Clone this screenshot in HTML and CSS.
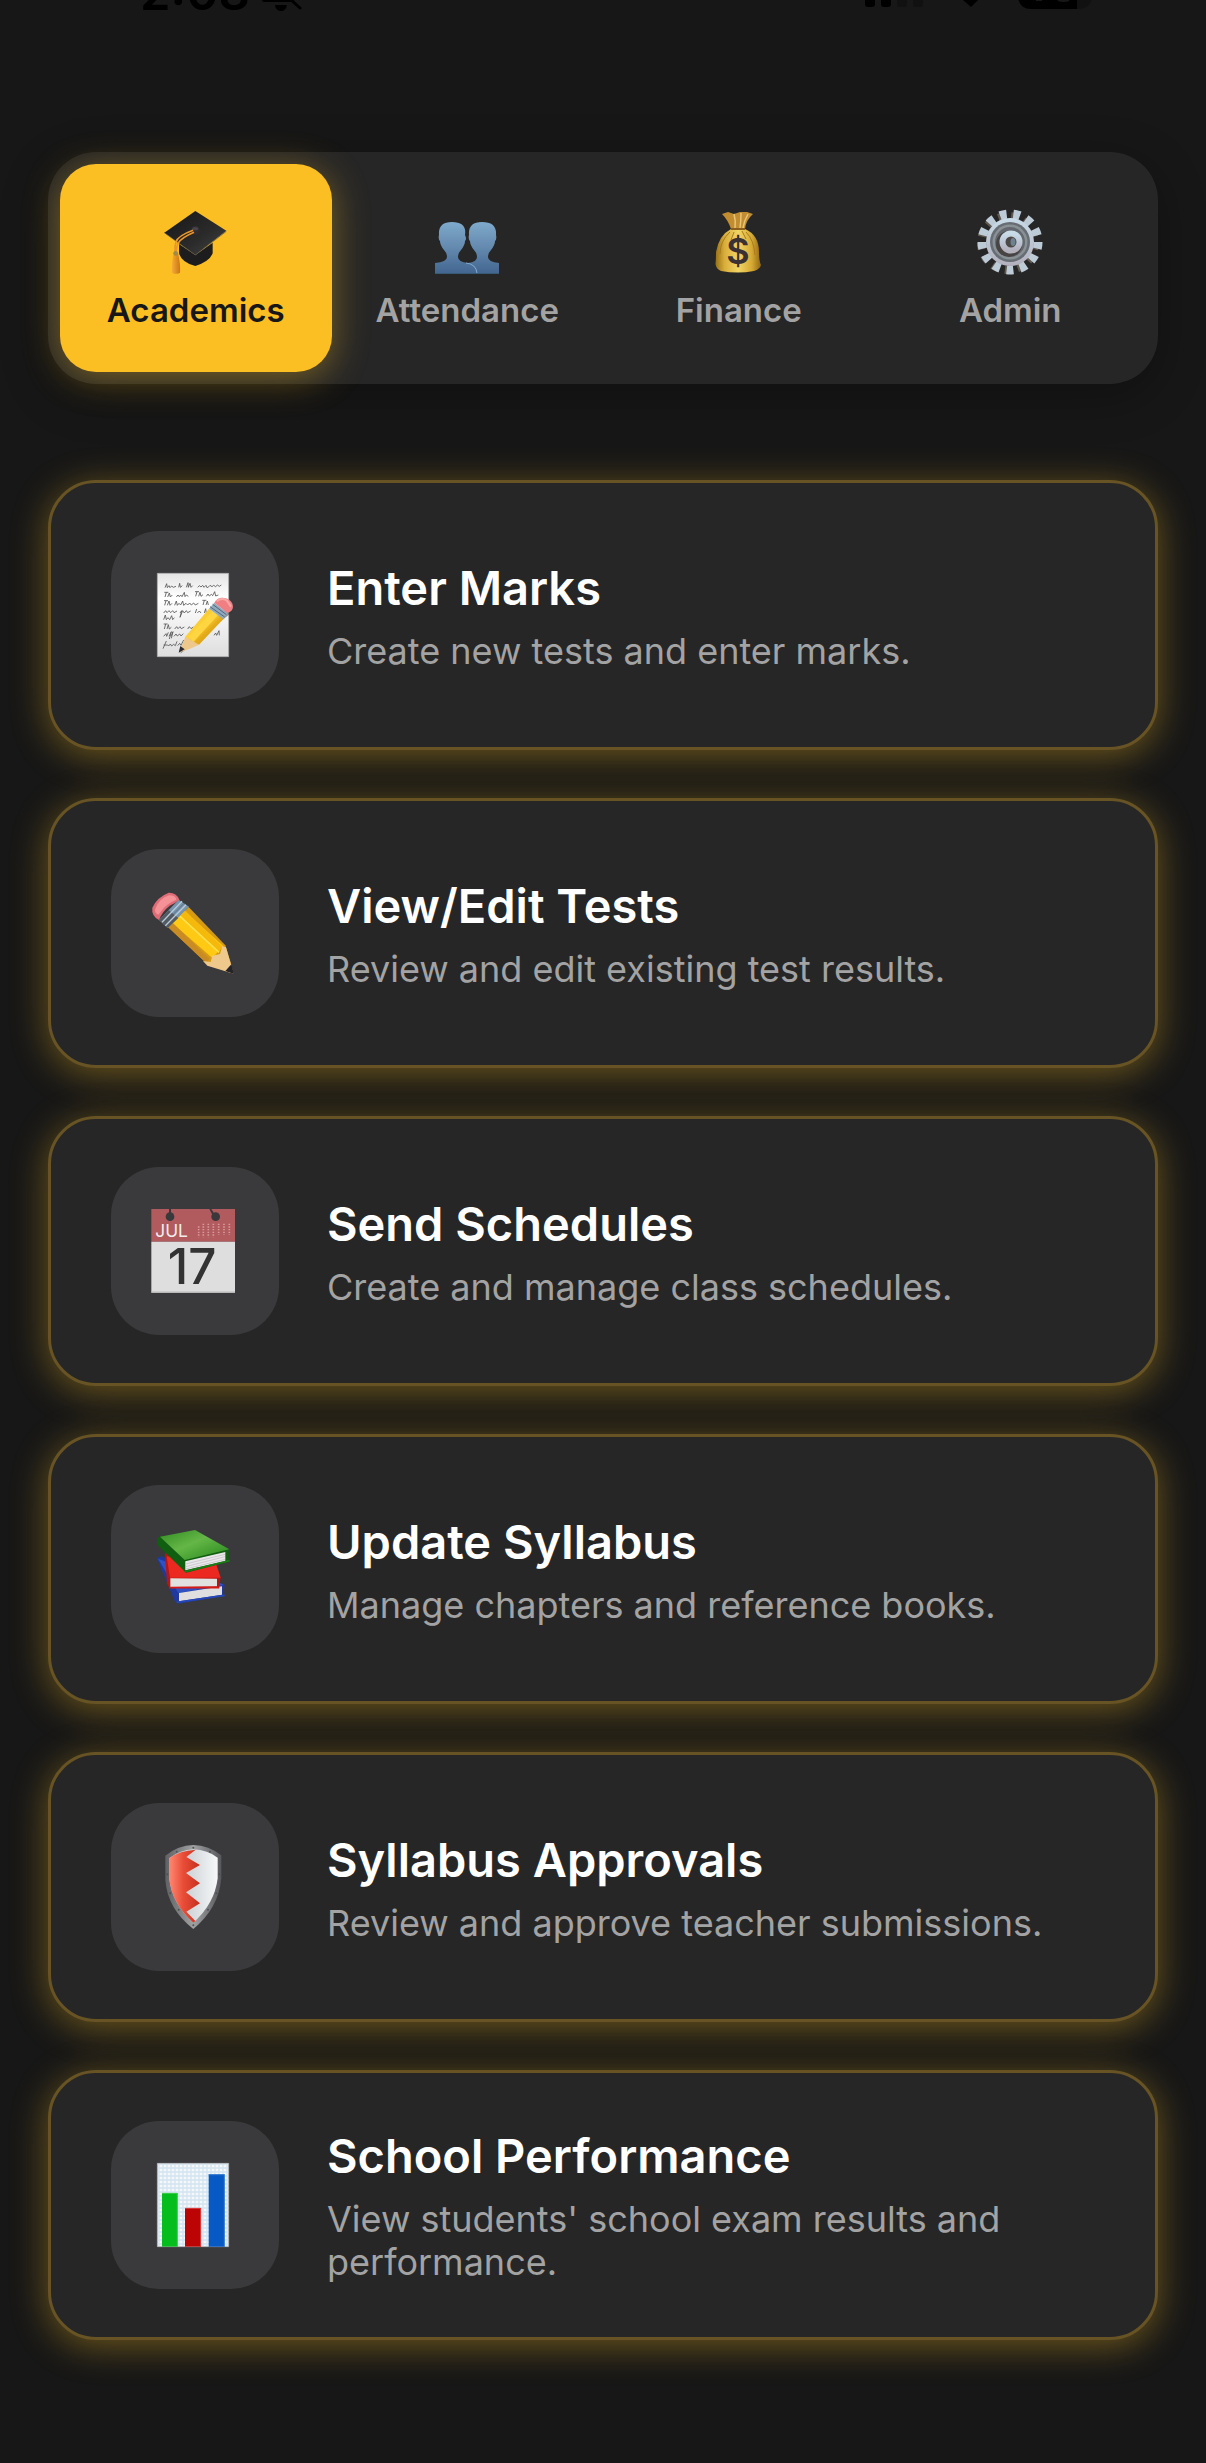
FILE: index.html
```html
<!DOCTYPE html>
<html lang="en">
<head>
<meta charset="utf-8">
<meta name="viewport" content="width=device-width, initial-scale=1">
<title>Academics</title>
<link rel="stylesheet" href="styles.css">
</head>
<body>
<div class="status" aria-hidden="true">
  <span class="status-left"><span class="clock">2:08</span>
    <svg class="bell" viewBox="0 0 40 12"><path d="M0 0H32V2H3Q0 2 0 0ZM13 5H25Q24 11 19 11Q14 11 13 5Z"/><path d="M29 0L38 8" stroke="#000" stroke-width="3" stroke-linecap="round"/></svg>
  </span>
  <svg class="signals" viewBox="0 0 228 12">
    <rect x="0" y="-12" width="10" height="19" rx="3"/><rect x="16" y="-12" width="10" height="19" rx="3"/>
    <rect x="32" y="-12" width="10" height="19" rx="3" fill="#111"/><rect x="48" y="-12" width="10" height="19" rx="3" fill="#111"/>
    <path d="M98 0H113L106 7Z"/>
    <path d="M212 -10H217Q227 -10 227 -3Q226 9 212 9Z" fill="#111"/><path d="M153 -10H212V9H166Q155 9 153 -2Z"/>
    <path d="M171 0H177M193 0Q199 2 204 0" stroke="#171717" stroke-width="2" fill="none"/>
  </svg>
</div>

<nav class="tabs" aria-label="Sections">
  <button class="tab tab-active" type="button" aria-current="page">
    <svg class="tab-icon" viewBox="38 27 198 198" aria-hidden="true">
      <defs><linearGradient id="cap" x1="0" y1="0" x2="1" y2="1"><stop offset="0" stop-color="#161616"/><stop offset=".6" stop-color="#2b2b2b"/><stop offset="1" stop-color="#444"/></linearGradient>
      <linearGradient id="tassel"><stop offset="0" stop-color="#f5ab34"/><stop offset="1" stop-color="#c97614"/></linearGradient></defs>
      <path d="M86 132V160Q94 188 135 198Q178 184 187 160V128L135 165Z" fill="#1d1d1d"/>
      <path d="M135 33L228 92L135 165L42 98Z" fill="url(#cap)"/>
      <path d="M42 98L135 165L228 94" fill="none" stroke="#555" stroke-width="2"/>
      <circle cx="135" cy="91" r="13" fill="#2f2c31"/><ellipse cx="135" cy="86" rx="9" ry="5" fill="#47434a"/>
      <path d="M128 91Q82 108 77 126Q73 136 74 154M131 97Q92 114 83 130Q78 140 78 154" fill="none" stroke="#e9962a" stroke-width="5"/>
      <path d="M70 158H83Q91 196 89 218Q77 225 65 218Q63 190 70 158Z" fill="url(#tassel)"/><circle cx="76" cy="160" r="7" fill="#9b8b4c"/>
    </svg>
    <span>Academics</span>
  </button>
  <button class="tab" type="button">
    <svg class="tab-icon" viewBox="0 0 66 66" aria-hidden="true">
      <defs><linearGradient id="bust" gradientUnits="userSpaceOnUse" x1="0" y1="13" x2="0" y2="65"><stop offset="0" stop-color="#7eaacb"/><stop offset=".5" stop-color="#6489ae"/><stop offset="1" stop-color="#41658f"/></linearGradient></defs>
      <path d="M1 65V54Q13 53 13 48Q13 44 10 41Q6 36 6 32Q4 30 5 26Q4 13 18 13Q33 13 31 26Q33 30 31 32Q31 36 27 41Q24 44 24 48Q24 53 34 54Q43 53 43 48Q43 44 40 41Q36 36 36 32Q34 30 35 26Q34 13 48 13Q63 13 62 26Q63 30 61 32Q61 36 57 41Q54 44 54 48Q54 53 65 54V65Z" fill="url(#bust)"/>
      <path d="M32 54Q42 55 43 64" fill="none" stroke="#83add0" stroke-width="1"/><path d="M1 64.500H65" stroke="#375a75"/>
    </svg>
    <span>Attendance</span>
  </button>
  <button class="tab" type="button">
    <svg class="tab-icon" viewBox="0 0 66 66" aria-hidden="true">
      <defs><linearGradient id="bag"><stop offset="0" stop-color="#987017"/><stop offset=".2" stop-color="#d9ae3a"/><stop offset=".5" stop-color="#f1d565"/><stop offset=".8" stop-color="#d5a833"/><stop offset="1" stop-color="#8e6513"/></linearGradient></defs>
      <path d="M16 5L22 3L28 5L34 3L41 3L47 5Q40 11 39 20H25Q22 11 16 5Z" fill="#c28c31"/>
      <path d="M28 5Q30 12 29 19M35 4Q35 12 34 19M42 5Q38 12 37 19" fill="none" stroke="#e8c575" stroke-width="1.500"/>
      <path d="M25 20H39Q53 26 53 43Q53 52 55 56Q54 60 48 62Q32 65 15 62Q10 60 9.500 55Q10 51 10 43Q13 26 25 20Z" fill="url(#bag)"/>
      <path d="M25 20H39" stroke="#8c5e1c" stroke-width="2"/><path d="M24 23Q14 32 14 45M28 23L25 31M40 23Q48 31 49 46M36 22L40 30" fill="none" stroke="#a97b20" stroke-width="1"/>
      <text class="dollar" x="32" y="55" text-anchor="middle">$</text>
    </svg>
    <span>Finance</span>
  </button>
  <button class="tab" type="button">
    <svg class="tab-icon" viewBox="0 0 66 66" aria-hidden="true">
      <defs><linearGradient id="gear" x1="0" y1="0" x2="0" y2="1"><stop offset="0" stop-color="#c8dce8"/><stop offset="1" stop-color="#b3b0bd"/></linearGradient></defs>
      <g fill="none"><circle cx="31" cy="34" r="27" stroke="#615a51" stroke-width="8" pathLength="52" stroke-dasharray="2 2"/>
      <circle cx="33" cy="33" r="28" stroke="#bdcbd7" stroke-width="9" pathLength="52" stroke-dasharray="2 2"/></g>
      <circle cx="33" cy="33" r="24" fill="url(#gear)"/><circle cx="33" cy="33" r="20" fill="#666d73"/><circle cx="33" cy="33" r="17.500" fill="#899197"/><circle cx="33" cy="33" r="15" fill="#62686d"/>
      <circle cx="32" cy="35" r="13" fill="#474443"/><circle cx="34" cy="33" r="8.500" fill="#4c4846" stroke="url(#gear)" stroke-width="6"/><ellipse cx="36" cy="33" rx="2.500" ry="4" fill="#6d8190"/>
    </svg>
    <span>Admin</span>
  </button>
</nav>

<main class="cards">
  <a class="card" href="#marks">
    <span class="card-icon"><svg viewBox="60 90 270 270" aria-hidden="true">
      <defs><linearGradient id="paper" x1="0" y1="0" x2="0" y2="1"><stop offset="0" stop-color="#e4e4e4"/><stop offset=".3" stop-color="#fff"/><stop offset="1" stop-color="#dedede"/></linearGradient>
      <linearGradient id="wood" x1="0" y1="0" x2="1" y2="1"><stop offset="0" stop-color="#edb316"/><stop offset=".45" stop-color="#ffd33c"/><stop offset=".6" stop-color="#e4ac18"/><stop offset="1" stop-color="#c38c12"/></linearGradient></defs>
      <path d="M82 100H296V350H82Z" fill="url(#paper)" stroke="#aaa" stroke-width="2"/>
      <g fill="none" stroke="#555" stroke-width="2.500" stroke-linejoin="round">
        <path d="M105 143l5-12 2 12 5-6 3 6 5-5 5 4 8-3m8 3l3-12 2 12 6-5m12 5l5-14 1 14 5-12 3 12 5-5m15 5l5-5 5 4 5-5 4 6 6-6 4 8 8-8 6 4 5-4 6 4 5-5 6 4 6-4"/>
        <path d="M103 157h12m-6 0l-4 14m8 0l5-12 3 12 6-6m12 6l5-6 4 5 4-5 4 5 7-13 2 13 4-5 6 4m20-14h12m-6 0l-4 14m9 0l4-12 3 12 6-5m10 5l5-7 4 6 6-5 4 4 6-12 3 13 8-3"/>
        <path d="M102 182h12m-6 0l-4 14m8 0l5-13 3 13 6-6m8 6l5-13 3 13 5-6 5 5 6-12 3 13 7-6 5 5 6-6 5 6 7-6 5 6 9-5m12-9h12m-6 0l-4 14m9 0l4-12 3 12"/>
        <path d="M101 219l6-7 4 6 6-6 5 6 6-6 4 6 9-5m9 6l5-7-5 20 8-20 5 7 6-7 4 6 9-5m14 6l4-12m2 12l6-6 5 6m10 0l4-13 2 13 6-6"/>
        <path d="M101 239l5-14 3 14 5-6 5 6 6-12 3 12 5-6"/>
        <path d="M101 252h12m-6 0l-4 15m8 0l4-13 3 13 6-5m10 5l6-7 4 6 6-6 4 6 9-5m10 6l5-7 5 6 7-5"/>
        <path d="M101 289l7-8 2 8 5-12m2 12l7-14-6 22m5-8l6-14-5 20m8-6l6-7 4 6 7-6 4 6 7-7m92 5l5-7 3 7 7-14 1 14"/>
        <path d="M99 326l10-23m-8 12h12l3 3 5-6 4 6 6-5 5 4 5-13m2 13l6-7 4 6 8-16"/>
      </g>
      <path d="M151 341L308 215L294 202L160 316Z" fill="#333" opacity=".5"/>
      <path d="M166 290L237 206L280 237L207 314L168 310Z" fill="url(#wood)"/><path d="M176 292L247 215L262 227L190 306Z" fill="#ffd641"/>
      <path d="M166 290L207 314Q183 326 148 337Z" fill="#edc88a"/><path d="M151 318L164 328L146 338Z" fill="#2b2b31"/>
      <path d="M237 206L253 188L292 219L280 237Z" fill="#8faac0"/><path d="M240 200L284 231M248 193L289 224" stroke="#5b6673" stroke-width="3"/>
      <path d="M253 188Q264 168 288 175Q309 183 309 201Q308 214 292 219Z" fill="#ef7f83"/><path d="M260 184Q274 171 290 181L303 200" fill="none" stroke="#f9a7a7" stroke-width="6"/>
    </svg></span>
    <span class="card-text"><strong>Enter Marks</strong><span class="desc">Create new tests and enter marks.</span></span>
  </a>
  <a class="card" href="#tests">
    <span class="card-icon"><svg viewBox="60 84 270 270" aria-hidden="true">
      <path d="M114 201L176 141L286 256L304 314L300 338L231 311Z" fill="#d69a13"/>
      <path d="M127 190L163 153L280 258L247 294Z" fill="#ffc914"/><path d="M151 166L166 152L277 260L266 277Z" fill="#f5b90c"/>
      <path d="M114 201L128 188L238 296L231 311Z" fill="#c98c24"/><path d="M150 169L267 277" stroke="#ffe04b" stroke-width="5"/>
      <path d="M219 303L242 306L247 287L270 282L277 258L288 262L311 341L232 317Z" fill="#efc88b"/><path d="M286 333L304 313L312 342Z" fill="#24242b"/>
      <path d="M87 180L146 119L177 140L113 204Z" fill="#7895ad"/><path d="M87 180L116 151L145 174L113 204Z" fill="#555a60"/>
      <path d="M96 187L156 124M106 197L168 134" stroke="#b6cadb" stroke-width="4"/><path d="M101 193L162 130" stroke="#505d6c" stroke-width="2"/>
      <path d="M87 180Q64 168 67 143Q82 111 116 98Q139 97 148 119Q137 129 119 137Q96 155 87 180Z" fill="#df6c76"/>
      <path d="M76 146Q88 115 117 106Q137 106 139 119Q119 126 102 143Q91 157 85 164Q72 158 76 146Z" fill="#f49298"/>
    </svg></span>
    <span class="card-text"><strong>View/Edit Tests</strong><span class="desc">Review and edit existing test results.</span></span>
  </a>
  <a class="card" href="#schedules">
    <span class="card-icon"><svg viewBox="60 78 270 270" aria-hidden="true">
      <path d="M64 87H315V185H64Z" fill="#b15b5e"/><path d="M64 185H315V338H64Z" fill="#dedede"/><path d="M64 336H315" stroke="#bbb" stroke-width="3"/>
      <g fill="#39393b"><circle cx="120" cy="110" r="13"/><circle cx="257" cy="110" r="13"/><path d="M117 87H123V102H117ZM238 87H244L253 101L247 104Z"/></g>
      <text class="cal-month" x="76" y="171">JUL</text>
      <g stroke="#d99a9b" stroke-width="5" stroke-dasharray="4 4"><path d="M206 139V172M220 131V172M235 131V172M250 131V172M266 131V164M282 131V164M298 131V164"/></g>
      <text class="cal-day" x="186" y="312" text-anchor="middle">17</text>
    </svg></span>
    <span class="card-text"><strong>Send Schedules</strong><span class="desc">Create and manage class schedules.</span></span>
  </a>
  <a class="card" href="#syllabus">
    <span class="card-icon"><svg viewBox="60 87 270 270" aria-hidden="true">
      <defs><linearGradient id="green" x1="0" y1="0" x2="1" y2="1"><stop offset="0" stop-color="#348b23"/><stop offset=".45" stop-color="#64b746"/><stop offset="1" stop-color="#23851a"/></linearGradient></defs>
      <path d="M80 188L94 184L284 270L279 303L145 326L134 318Z" fill="#1f399c"/><path d="M84 191L145 294L282 270L240 250Z" fill="#2f51c3"/><path d="M147 294L276 274V299L147 319Z" fill="#dfdfdf"/><path d="M140 322L284 301" stroke="#2747b9" stroke-width="5"/>
      <path d="M105 174L260 210L272 249L267 278L118 279L111 266Z" fill="#b91512"/><path d="M110 184L120 248L272 248L258 207Z" fill="#ec2920"/><path d="M121 250L261 251V274L121 276Z" fill="#e1e1df"/><path d="M118 278H268" stroke="#d61b17" stroke-width="5"/>
      <path d="M82 128L96 122L296 163V200L168 233L82 149Z" fill="#105e10"/><path d="M90 125L195 105L298 163L164 195Z" fill="url(#green)"/><path d="M166 199L286 171V198L166 226Z" fill="#e9e7e9"/><path d="M167 207L285 178M167 215L285 185M167 222L285 193" stroke="#bdbbc0" stroke-width="2"/><path d="M164 230L299 197" stroke="#1d7c18" stroke-width="5"/>
    </svg></span>
    <span class="card-text"><strong>Update Syllabus</strong><span class="desc">Manage chapters and reference books.</span></span>
  </a>
  <a class="card" href="#approvals">
    <span class="card-icon"><svg viewBox="60 81 270 270" aria-hidden="true">
      <defs><linearGradient id="steel"><stop offset="0" stop-color="#606164"/><stop offset=".5" stop-color="#a0a1a3"/><stop offset="1" stop-color="#56575a"/></linearGradient><linearGradient id="red"><stop offset="0" stop-color="#ff8770"/><stop offset=".45" stop-color="#e94d38"/><stop offset="1" stop-color="#c62f1d"/></linearGradient><linearGradient id="silver"><stop offset="0" stop-color="#b7bdc0"/><stop offset="1" stop-color="#f6f8f9"/></linearGradient></defs>
      <path d="M106 122Q144 91 190 90Q236 91 274 121V190Q266 280 190 342Q112 281 106 195Z" fill="url(#steel)"/>
      <path d="M118 129Q150 105 190 103Q233 105 263 128V190Q254 266 190 323Q126 266 118 193Z" fill="url(#silver)"/>
      <path d="M118 129Q150 107 197 104L169 126L210 150L168 174L210 205L168 232L210 265L169 290L196 318L190 323Q126 266 118 193Z" fill="url(#red)"/>
      <g fill="#4f5153"><circle cx="190" cy="98" r="3"/><circle cx="140" cy="110" r="3"/><circle cx="240" cy="110" r="3"/><circle cx="112" cy="178" r="3"/><circle cx="268" cy="178" r="3"/><circle cx="121" cy="235" r="3"/><circle cx="259" cy="235" r="3"/><circle cx="146" cy="284" r="3"/><circle cx="234" cy="284" r="3"/><circle cx="190" cy="331" r="3"/></g>
    </svg></span>
    <span class="card-text"><strong>Syllabus Approvals</strong><span class="desc">Review and approve teacher submissions.</span></span>
  </a>
  <a class="card" href="#performance">
    <span class="card-icon"><svg viewBox="60 75 270 270" aria-hidden="true">
      <defs><pattern id="grid" width="12" height="12" patternUnits="userSpaceOnUse"><path d="M0 3H12M3 0V12" stroke="#bfdcf0" stroke-width="4" opacity=".7"/></pattern></defs>
      <path d="M82 85H296V335H82Z" fill="#f7f7f7"/><path d="M82 85H296V335H82Z" fill="url(#grid)" stroke="#aaa" stroke-width="2"/>
      <path d="M96 174H143V335H96Z" fill="#05bd1c"/><path d="M165 219H213V335H165Z" fill="#bd0404"/><path d="M236 118H284V335H236Z" fill="#0759c3"/>
      <g fill="none" stroke-width="3"><path d="M96 175H142V335" stroke="#44cf50"/><path d="M165 220H212V335" stroke="#d94444"/><path d="M236 119H283V335" stroke="#4283d0"/></g>
    </svg></span>
    <span class="card-text"><strong>School Performance</strong><span class="desc">View students' school exam results and performance.</span></span>
  </a>
</main>
</body>
</html>
```
FILE: styles.css
```css
* { box-sizing: border-box; }

body {
  margin: 0;
  min-height: 100vh;
  background: #171717;
  color: #fff;
  font-family: Inter, "Liberation Sans", sans-serif;
}

.status {
  display: flex;
  justify-content: space-between;
  height: 12px;
  padding: 0 113px 0 140px;
  overflow: hidden;
  color: #000;
}
.status-left { display: flex; align-items: flex-end; gap: 12px; }
.clock { font-size: 49px; font-weight: 600; line-height: 38px; }
.bell { width: 40px; height: 12px; }
.signals { width: 228px; height: 12px; }

.tabs {
  display: grid;
  grid-template-columns: repeat(4, 1fr);
  margin: 140px 48px 96px;
  padding: 12px;
  border-radius: 48px;
  background: #262626;
  box-shadow: 0 12px 48px rgba(0, 0, 0, .3);
}
.tab {
  display: flex;
  flex-direction: column;
  align-items: center;
  gap: 16px;
  height: 208px;
  padding: 45px 0 0;
  border: 0;
  border-radius: 36px;
  background: transparent;
  color: #a3a3a3;
  font: 600 33px/38px Inter, "Liberation Sans", sans-serif;
}
.tab-active {
  background: #fbbf24;
  color: #171717;
  box-shadow: 0 6px 36px rgba(251, 191, 36, .4);
}
.tab-icon { width: 66px; height: 66px; }
.dollar { font: 600 36px Inter, sans-serif; fill: #3b3034; }

.cards {
  display: flex;
  flex-direction: column;
  gap: 48px;
  padding: 0 48px 96px;
}
.card {
  display: flex;
  align-items: center;
  gap: 48px;
  padding: 48px 60px;
  border: 3px solid #675323;
  border-radius: 48px;
  background: #262626;
  box-shadow: 0 6px 36px rgba(251, 191, 36, .38);
  color: inherit;
  text-decoration: none;
}
.card-icon {
  display: flex;
  flex: none;
  align-items: center;
  justify-content: center;
  width: 168px;
  height: 168px;
  border-radius: 48px;
  background: #3a3a3c;
}
.card-icon svg { width: 90px; height: 90px; }
.cal-month { font: 400 52px Inter, sans-serif; fill: #eee; }
.cal-day { font: 500 148px Inter, sans-serif; fill: #333; }
.card-text { display: flex; flex-direction: column; gap: 12px; }
.card-text strong { font-size: 47px; font-weight: 600; line-height: 60px; }
.desc { color: #a3a3a3; font-size: 36px; line-height: 43px; }
```
